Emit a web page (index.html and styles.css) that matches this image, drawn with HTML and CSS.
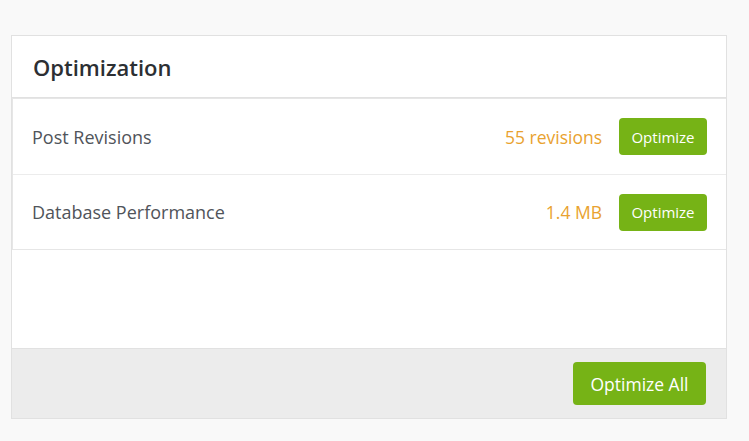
FILE: index.html
```html
<!DOCTYPE html>
<html>
<head>
<meta charset="utf-8">
<link rel="stylesheet" href="styles.css">
</head>
<body>
<div class="panel">
  <div class="panel-header">
    <h2 class="panel-title">Optimization</h2>
  </div>
  <div class="panel-body">
    <div class="opt-list">
      <div class="opt-row">
        <span class="opt-label">Post Revisions</span>
        <span class="opt-value">55 revisions</span>
        <button class="btn btn-small">Optimize</button>
      </div>
      <div class="opt-row">
        <span class="opt-label">Database Performance</span>
        <span class="opt-value">1.4 MB</span>
        <button class="btn btn-small">Optimize</button>
      </div>
    </div>
  </div>
  <div class="panel-footer">
    <button class="btn btn-large">Optimize All</button>
  </div>
</div>
</body>
</html>
```
FILE: styles.css
```css
html, body {
  margin: 0;
  padding: 0;
}
body {
  background: #f9f9f9;
  font-family: "Open Sans", "Noto Sans", sans-serif;
  padding: 35px 0 0 11px;
}
.panel {
  width: 714px;
  background: #fff;
  border: 1px solid #e1e1e1;
}
.panel-header {
  height: 61px;
  border-bottom: 1px solid #e1e1e1;
  display: flex;
  align-items: center;
  padding-left: 21px;
}
.panel-title {
  margin: 0;
  font-size: 22px;
  font-weight: 600;
  color: #2c2f33;
}
.panel-body {
  height: 250px;
}
.opt-list {
  border: 1px solid #e6e6e6;
  border-right: none;
}
.opt-row {
  display: flex;
  align-items: center;
  height: 75px;
  padding: 0 19px 0 19px;
  border-bottom: 1px solid #ececec;
}
.opt-row:last-child {
  height: 74px;
  border-bottom: none;
}
.opt-label {
  flex: 1;
  font-size: 18px;
  color: #50545a;
}
.opt-value {
  font-size: 17.5px;
  color: #e9a22f;
  margin-right: 17px;
}
.btn {
  border: none;
  background: #76b316;
  color: #fff;
  font-family: "Open Sans", "Noto Sans", sans-serif;
  border-radius: 4px;
  cursor: pointer;
}
.btn-small {
  width: 88px;
  height: 37px;
  font-size: 15px;
  padding: 0;
}
.btn-large {
  width: 133px;
  height: 43px;
  font-size: 17.5px;
  padding: 0;
}
.panel-footer {
  background: #ececec;
  border-top: 1px solid #e1e1e1;
  height: 69px;
  display: flex;
  align-items: center;
  justify-content: flex-end;
  padding-right: 20px;
}
```
